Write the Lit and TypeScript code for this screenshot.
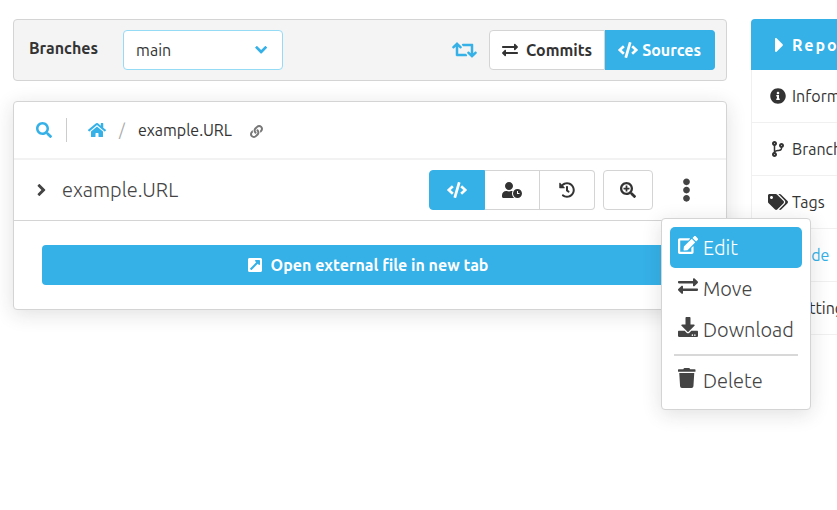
import { LitElement, html, css, svg } from "lit";
import { customElement, property, state } from "lit/decorators.js";
import { classMap } from "lit/directives/class-map.js";

const ICONS: Record<string, [number, string]> = {
  search: [512, "M505 442.7L405.3 343c-4.5-4.5-10.6-7-17-7H372c27.6-35.3 44-79.7 44-128C416 93.1 322.9 0 208 0S0 93.1 0 208s93.1 208 208 208c48.3 0 92.7-16.4 128-44v16.3c0 6.4 2.5 12.5 7 17l99.7 99.7c9.4 9.4 24.6 9.4 33.9 0l28.3-28.3c9.4-9.4 9.4-24.6.1-34zM208 336c-70.7 0-128-57.2-128-128 0-70.7 57.2-128 128-128 70.7 0 128 57.2 128 128 0 70.7-57.2 128-128 128z"],
  home: [576, "M280.37 148.26L96 300.11V464a16 16 0 0 0 16 16l112.06-.29a16 16 0 0 0 15.92-16V368a16 16 0 0 1 16-16h64a16 16 0 0 1 16 16v95.64a16 16 0 0 0 16 16.05L464 480a16 16 0 0 0 16-16V300L295.67 148.26a12.19 12.19 0 0 0-15.3 0zM571.6 251.47L488 182.56V44.05a12 12 0 0 0-12-12h-56a12 12 0 0 0-12 12v72.61L318.47 43a48 48 0 0 0-61 0L4.34 251.47a12 12 0 0 0-1.6 16.9l25.5 31A12 12 0 0 0 45.15 301l235.22-193.74a12.19 12.19 0 0 1 15.3 0L530.9 301a12 12 0 0 0 16.9-1.6l25.5-31a12 12 0 0 0-1.7-16.93z"],
  code: [640, "M278.9 511.5l-61-17.7c-6.4-1.8-10-8.5-8.2-14.9L346.2 8.7c1.8-6.4 8.5-10 14.9-8.2l61 17.7c6.4 1.8 10 8.5 8.2 14.9L293.8 503.3c-1.9 6.4-8.5 10.1-14.9 8.2zm-114-112.2l43.5-46.4c4.6-4.9 4.3-12.7-.8-17.2L117 256l90.6-79.7c5.1-4.5 5.5-12.3.8-17.2l-43.5-46.4c-4.5-4.8-12.1-5.1-17-.5L3.8 247.2c-5.1 4.7-5.1 12.8 0 17.5l144.1 135.1c4.9 4.6 12.5 4.4 17-.5zm327.2.6l144.1-135.1c5.1-4.7 5.1-12.8 0-17.5L492.1 112.1c-4.8-4.5-12.4-4.3-17 .5L431.6 159c-4.6 4.9-4.3 12.7.8 17.2L523 256l-90.6 79.7c-5.1 4.5-5.5 12.3-.8 17.2l43.5 46.4c4.5 4.9 12.1 5.1 17 .6z"],
  exchange: [512, "M0 168v-16c0-13.255 10.745-24 24-24h360V80c0-21.367 25.899-32.042 40.971-16.971l80 80c9.372 9.373 9.372 24.569 0 33.941l-80 80C409.956 271.982 384 261.456 384 240v-48H24c-13.255 0-24-10.745-24-24zm488 152H128v-48c0-21.314-25.862-32.08-40.971-16.971l-80 80c-9.372 9.373-9.372 24.569 0 33.941l80 80C102.057 463.997 128 453.437 128 432v-48h360c13.255 0 24-10.745 24-24v-16c0-13.255-10.745-24-24-24z"],
  retweet: [640, "M629.657 343.598L528.971 444.284c-9.373 9.372-24.568 9.372-33.941 0L394.343 343.598c-9.373-9.373-9.373-24.569 0-33.941l10.823-10.823c9.562-9.562 25.133-9.34 34.419.492L480 342.118V160H292.451a24.005 24.005 0 0 1-16.971-7.029l-16-16C244.361 121.851 255.069 96 276.451 96H520c13.255 0 24 10.745 24 24v222.118l40.416-42.792c9.285-9.831 24.856-10.054 34.419-.492l10.823 10.823c9.372 9.372 9.372 24.569-.001 33.941zm-265.138 15.431A23.999 23.999 0 0 0 347.548 352H160V169.881l40.416 42.792c9.286 9.831 24.856 10.054 34.419.491l10.822-10.822c9.373-9.373 9.373-24.569 0-33.941L144.971 67.716c-9.373-9.373-24.569-9.373-33.941 0L10.343 168.402c-9.373 9.373-9.373 24.569 0 33.941l10.822 10.822c9.562 9.562 25.133 9.34 34.419-.491L96 169.882V392c0 13.255 10.745 24 24 24h243.549c21.382 0 32.09-25.851 16.971-40.971l-16.001-16z"],
  chevronDown: [448, "M207.029 381.476L12.686 187.132c-9.373-9.373-9.373-24.569 0-33.941l38.667-38.667c9.357-9.357 24.522-9.375 33.901-.04L224 252.505l138.745-138.021c9.379-9.335 24.544-9.317 33.901.04l38.667 38.667c9.373 9.373 9.373 24.569 0 33.941L240.971 381.476c-9.373 9.372-24.569 9.372-33.942 0z"],
  chevronRight: [384, "M333.476 272.971L139.132 467.314c-9.373 9.373-24.569 9.373-33.941 0l-40.667-40.667c-9.357-9.357-9.375-24.522-.04-33.901L200.505 256 64.484 119.255c-9.335-9.379-9.317-24.544.04-33.901l40.667-40.667c9.373-9.373 24.569-9.373 33.941 0L333.475 239.03c9.373 9.372 9.373 24.568.001 33.941z"],
  link: [512, "M326.612 185.391c59.747 59.809 58.927 155.698.36 214.59-.11.12-.24.25-.36.37l-67.2 67.2c-59.27 59.27-155.699 59.262-214.96 0-59.27-59.26-59.27-155.7 0-214.96l37.106-37.106c9.84-9.84 26.786-3.3 27.294 10.606.648 17.722 3.826 35.527 9.69 52.721 1.986 5.822.567 12.262-3.783 16.612l-13.087 13.087c-28.026 28.026-28.905 73.66-1.155 101.96 28.024 28.579 74.086 28.749 102.325.51l67.2-67.19c28.191-28.191 28.073-73.757 0-101.83-3.701-3.694-7.429-6.564-10.341-8.569a16.037 16.037 0 0 1-6.947-12.606c-.396-10.567 3.348-21.456 11.698-29.806l21.054-21.055c5.521-5.521 14.182-6.199 20.584-1.731a152.482 152.482 0 0 1 20.522 17.197zM467.547 44.449c-59.261-59.262-155.69-59.27-214.96 0l-67.2 67.2c-.12.12-.25.25-.36.37-58.566 58.892-59.387 154.781.36 214.59a152.454 152.454 0 0 0 20.521 17.196c6.402 4.468 15.064 3.789 20.584-1.731l21.054-21.055c8.35-8.35 12.094-19.239 11.698-29.806a16.037 16.037 0 0 0-6.947-12.606c-2.912-2.005-6.64-4.875-10.341-8.569-28.073-28.073-28.191-73.639 0-101.83l67.2-67.19c28.239-28.239 74.3-28.069 102.325.51 27.75 28.3 26.872 73.934-1.155 101.96l-13.087 13.087c-4.35 4.35-5.769 10.79-3.783 16.612 5.864 17.194 9.042 34.999 9.69 52.721.509 13.906 17.454 20.446 27.294 10.606l37.106-37.106c59.271-59.259 59.271-155.699.001-214.959z"],
  userClock: [640, "M496 224c-79.6 0-144 64.4-144 144s64.4 144 144 144 144-64.4 144-144-64.4-144-144-144zm64 150.3c0 5.3-4.4 9.7-9.7 9.7h-60.6c-5.3 0-9.7-4.4-9.7-9.7v-76.6c0-5.3 4.4-9.7 9.7-9.7h12.6c5.3 0 9.7 4.4 9.7 9.7V352h38.3c5.3 0 9.7 4.4 9.7 9.7v12.6zM320 368c0-27.8 6.7-54.1 18.2-77.5-8-1.5-16.2-2.5-24.6-2.5h-16.7c-22.2 10.2-46.9 16-72.9 16s-50.6-5.8-72.9-16h-16.7C60.2 288 0 348.2 0 422.4V464c0 26.5 21.5 48 48 48h347.1c-45.3-31.9-75.1-84.5-75.1-144zm-96-112c70.7 0 128-57.3 128-128S294.7 0 224 0 96 57.3 96 128s57.3 128 128 128z"],
  history: [512, "M504 255.531c.253 136.64-111.18 248.372-247.82 248.468-59.015.042-113.223-20.53-155.822-54.911-11.077-8.94-11.905-25.541-1.839-35.607l11.267-11.267c8.609-8.609 22.353-9.551 31.891-1.984C173.062 425.135 212.781 440 256 440c101.705 0 184-82.311 184-184 0-101.705-82.311-184-184-184-48.814 0-93.149 18.969-126.068 49.932l50.754 50.754c10.08 10.08 2.941 27.314-11.313 27.314H24c-8.837 0-16-7.163-16-16V38.627c0-14.254 17.234-21.393 27.314-11.314l49.372 49.372C129.209 34.136 189.552 8 256 8c136.81 0 247.747 110.78 248 247.531zm-180.912 78.784l9.823-12.63c8.138-10.463 6.253-25.542-4.21-33.679L288 256.349V152c0-13.255-10.745-24-24-24h-16c-13.255 0-24 10.745-24 24v135.651l65.409 50.874c10.463 8.137 25.541 6.253 33.679-4.21z"],
  searchPlus: [512, "M304 192v32c0 6.6-5.4 12-12 12h-56v56c0 6.6-5.4 12-12 12h-32c-6.6 0-12-5.4-12-12v-56h-56c-6.6 0-12-5.4-12-12v-32c0-6.6 5.4-12 12-12h56v-56c0-6.6 5.4-12 12-12h32c6.6 0 12 5.4 12 12v56h56c6.6 0 12 5.4 12 12zm201 284.7L476.7 505c-9.4 9.4-24.6 9.4-33.9 0L343 405.3c-4.5-4.5-7-10.6-7-17V372c-35.3 27.6-79.7 44-128 44C93.1 416 0 322.9 0 208S93.1 0 208 0s208 93.1 208 208c0 48.3-16.4 92.7-44 128h16.3c6.4 0 12.5 2.5 17 7l99.7 99.7c9.3 9.4 9.3 24.6 0 34zM344 208c0-75.2-60.8-136-136-136S72 132.8 72 208s60.8 136 136 136 136-60.8 136-136z"],
  ellipsis: [192, "M96 184c39.8 0 72 32.2 72 72s-32.2 72-72 72-72-32.2-72-72 32.2-72 72-72zM24 80c0 39.8 32.2 72 72 72s72-32.2 72-72S135.8 8 96 8 24 40.2 24 80zm0 352c0 39.8 32.2 72 72 72s72-32.2 72-72-32.2-72-72-72-72 32.2-72 72z"],
  external: [448, "M448 80v352c0 26.51-21.49 48-48 48H48c-26.51 0-48-21.49-48-48V80c0-26.51 21.49-48 48-48h352c26.51 0 48 21.49 48 48zm-88 16H248.029c-21.313 0-32.08 25.861-16.971 40.971l31.984 31.987L67.515 364.485c-4.686 4.686-4.686 12.284 0 16.971l31.029 31.029c4.687 4.686 12.285 4.686 16.971 0l195.526-195.526 31.988 31.991C358.058 264.977 384 254.425 384 232V120c0-13.255-10.745-24-24-24z"],
  edit: [576, "M402.6 83.2l90.2 90.2c3.8 3.8 3.8 10 0 13.8L274.4 405.6l-92.8 10.3c-12.4 1.4-22.9-9.1-21.5-21.5l10.3-92.8L388.8 83.2c3.8-3.8 10-3.8 13.8 0zm162-22.9l-48.8-48.8c-15.2-15.2-39.9-15.2-55.2 0l-35.4 35.4c-3.8 3.8-3.8 10 0 13.8l90.2 90.2c3.8 3.8 10 3.8 13.8 0l35.4-35.4c15.2-15.3 15.2-40 0-55.2zM384 346.2V448H64V128h229.8c3.2 0 6.2-1.3 8.5-3.5l40-40c7.6-7.6 2.2-20.5-8.5-20.5H48C21.5 64 0 85.5 0 112v352c0 26.5 21.5 48 48 48h352c26.5 0 48-21.5 48-48V306.2c0-10.7-12.9-16-20.5-8.5l-40 40c-2.2 2.3-3.5 5.3-3.5 8.5z"],
  download: [512, "M216 0h80c13.3 0 24 10.7 24 24v168h87.7c17.8 0 26.7 21.5 14.1 34.1L269.7 378.3c-7.5 7.5-19.8 7.5-27.3 0L90.1 226.1c-12.6-12.6-3.7-34.1 14.1-34.1H192V24c0-13.3 10.7-24 24-24zm296 376v112c0 13.3-10.7 24-24 24H24c-13.3 0-24-10.7-24-24V376c0-13.3 10.7-24 24-24h146.7l49 49c20.1 20.1 52.5 20.1 72.6 0l49-49H488c13.3 0 24 10.7 24 24zm-124 88c0-11-9-20-20-20s-20 9-20 20 9 20 20 20 20-9 20-20zm64 0c0-11-9-20-20-20s-20 9-20 20 9 20 20 20 20-9 20-20z"],
  trash: [448, "M432 32H312l-9.4-18.7A24 24 0 0 0 281.1 0H166.8a23.72 23.72 0 0 0-21.4 13.3L136 32H16A16 16 0 0 0 0 48v32a16 16 0 0 0 16 16h416a16 16 0 0 0 16-16V48a16 16 0 0 0-16-16zM53.2 467a48 48 0 0 0 47.9 45h245.8a48 48 0 0 0 47.9-45L416 128H32z"],
  caretRight: [192, "M0 384.662V127.338c0-17.818 21.543-26.741 34.142-14.142l128.662 128.662c7.81 7.81 7.81 20.474 0 28.284L34.142 398.804C21.543 411.404 0 402.48 0 384.662z"],
  info: [512, "M256 8C119.043 8 8 119.083 8 256c0 136.997 111.043 248 248 248s248-111.003 248-248C504 119.083 392.957 8 256 8zm0 110c23.196 0 42 18.804 42 42s-18.804 42-42 42-42-18.804-42-42 18.804-42 42-42zm56 254c0 6.627-5.373 12-12 12h-88c-6.627 0-12-5.373-12-12v-24c0-6.627 5.373-12 12-12h12v-64h-12c-6.627 0-12-5.373-12-12v-24c0-6.627 5.373-12 12-12h64c6.627 0 12 5.373 12 12v100h12c6.627 0 12 5.373 12 12v24z"],
  branch: [384, "M384 144c0-44.2-35.8-80-80-80s-80 35.8-80 80c0 36.4 24.3 67.1 57.5 76.8-.6 16.1-4.2 28.5-11 36.9-15.4 19.2-49.3 22.4-85.2 25.7-28.2 2.6-57.4 5.4-81.3 16.9v-144c32.5-10.2 56-40.5 56-76.3 0-44.2-35.8-80-80-80S0 35.8 0 80c0 35.8 23.5 66.1 56 76.3v199.3C23.5 365.9 0 396.2 0 432c0 44.2 35.8 80 80 80s80-35.8 80-80c0-34-21.2-63.1-51.2-74.6 3.1-5.2 7.8-9.8 14.9-13.4 16.2-8.2 40.4-10.4 66.1-12.8 42.2-3.9 90-8.4 118.2-43.4 14-17.4 21.1-39.8 21.6-67.9 31.6-10.8 54.4-40.7 54.4-75.9zM80 64c8.8 0 16 7.2 16 16s-7.2 16-16 16-16-7.2-16-16 7.2-16 16-16zm0 384c-8.8 0-16-7.2-16-16s7.2-16 16-16 16 7.2 16 16-7.2 16-16 16zm224-320c8.8 0 16 7.2 16 16s-7.2 16-16 16-16-7.2-16-16 7.2-16 16-16z"],
  tags: [640, "M497.941 225.941L286.059 14.059A48 48 0 0 0 252.118 0H48C21.49 0 0 21.49 0 48v204.118a48 48 0 0 0 14.059 33.941l211.882 211.882c18.744 18.745 49.136 18.746 67.882 0l204.118-204.118c18.745-18.745 18.745-49.137 0-67.882zM112 160c-26.51 0-48-21.49-48-48s21.49-48 48-48 48 21.49 48 48-21.49 48-48 48zm513.941 133.823L421.823 497.941c-18.745 18.745-49.137 18.745-67.882 0l-.36-.36L527.64 323.522c16.999-16.999 26.36-39.6 26.36-63.64s-9.362-46.641-26.36-63.64L331.397 0h48.721a48 48 0 0 1 33.941 14.059l211.882 211.882c18.745 18.745 18.745 49.137 0 67.882z"],
};

/** Glyph whose height is the current font size. */
@customElement("ui-icon")
class UiIcon extends LitElement {
  @property() name = "code";

  static styles = css`
    :host { display: inline-flex; flex: none; }
    .glyph { display: block; height: 1em; width: auto; fill: currentColor; }
  `;

  render() {
    const [width, d] = ICONS[this.name];
    return html`<svg class="glyph" viewBox="0 0 ${width} 512" aria-hidden="true">${svg`<path d=${d}></path>`}</svg>`;
  }
}

@customElement("app-root")
class AppRoot extends LitElement {
  @state() private view = "code";
  @state() private menuOpen = true;

  private views = [
    { id: "code", icon: "code", label: "Source" },
    { id: "blame", icon: "userClock", label: "Blame" },
    { id: "history", icon: "history", label: "History" },
  ];

  private actions = [
    { icon: "edit", label: "Edit", active: true },
    { icon: "exchange", label: "Move", active: false },
    { icon: "download", label: "Download", active: false },
  ];

  private nav = [
    { icon: "info", label: "Information", active: false },
    { icon: "branch", label: "Branches", active: false },
    { icon: "tags", label: "Tags", active: false },
    { icon: "code", label: "Code", active: true },
    { icon: "history", label: "Settings", active: false },
  ];

  static styles = css`
    :host {
      --blue: #35b1e8;
      --line: #d4d4d5;
      --text: #333;
      display: block;
      min-height: 100vh;
      box-sizing: border-box;
      background: #fff;
      color: var(--text);
      font: 16px/20px Ubuntu, "Open Sans", sans-serif;
    }
    * { box-sizing: border-box; }
    button, select { font: inherit; color: inherit; margin: 0; cursor: pointer; }
    a { color: inherit; text-decoration: none; }

    .page { display: flex; align-items: flex-start; gap: 24px; padding: 19px 0 19px 13px; }
    .main { flex: 1; min-width: 0; display: grid; gap: 20px; }

    .toolbar {
      display: flex;
      align-items: center;
      padding: 10px 11px 10px 15px;
      background: #f4f4f4;
      border: 1px solid var(--line);
      border-radius: 4px;
    }
    .toolbar-label { font-weight: 700; padding-bottom: 4px; }
    .select-wrap { position: relative; width: 160px; margin-left: 25px; color: var(--blue); }
    .select {
      appearance: none;
      display: block;
      width: 100%;
      height: 40px;
      padding: 0 40px 0 12px;
      color: var(--text);
      background: #fff;
      border: 1px solid #96dbf6;
      border-radius: 4px;
    }
    .select-arrow { position: absolute; right: 16px; top: 13px; font-size: 14px; pointer-events: none; }
    .sync { margin-left: auto; padding: 0; border: 0; background: none; color: var(--blue); font-size: 20px; display: flex; }

    .group { display: flex; }
    .tabs { margin-left: 12px; }
    .btn {
      display: flex;
      align-items: center;
      justify-content: center;
      height: 40px;
      padding: 0 12px;
      font-weight: 700;
      background: #fff;
      border: 1px solid var(--line);
      white-space: nowrap;
    }
    .btn ui-icon { font-size: 16px; }
    .btn.on { background: var(--blue); border-color: var(--blue); color: #fff; }
    .group .btn + .btn { border-left: 0; }
    .group .btn:first-child { border-radius: 4px 0 0 4px; }
    .group .btn:last-child { border-radius: 0 4px 4px 0; }
    .commits { gap: 8px; }
    .sources { gap: 4px; padding: 0 13px; }

    .card {
      background: #fff;
      border: 1px solid var(--line);
      border-radius: 4px;
      box-shadow: 0 4px 20px rgba(34, 36, 38, .14);
    }
    .crumbs {
      display: flex;
      align-items: center;
      height: 58px;
      padding: 0 22px;
      border-bottom: 2px solid #f2f2f2;
    }
    .plain { display: flex; padding: 0; border: 0; background: none; }
    .search { color: var(--blue); font-size: 16px; padding-right: 14px; }
    .rule { width: 1px; height: 24px; background: #ccc; }
    .home { display: flex; color: var(--blue); font-size: 16px; margin-left: 21px; }
    .slash { margin: 0 13px; color: #aaa; }
    .permalink { color: #777; font-size: 13px; margin-left: 18px; padding-top: 2px; }

    .file { display: flex; align-items: center; height: 61px; padding: 0 27px 0 22px; border-bottom: 1px solid var(--line); }
    .toggle { font-size: 14px; width: 26px; color: #444; }
    .file-name { flex: 1; margin: 0; color: #444; font-size: 20px; font-weight: 300; line-height: 24px; }
    .icon-btn { width: 55px; padding: 0; }
    .group .icon-btn:first-child { width: 56px; }
    .zoom { width: 50px; margin-left: 8px; border-radius: 4px; }
    .more-wrap { position: relative; margin-left: 20px; }
    .more { width: 26px; justify-content: center; font-size: 24px; color: #444; }

    .menu {
      position: absolute;
      z-index: 2;
      top: 40px;
      left: -12px;
      width: 150px;
      padding: 8px;
      background: #fff;
      border: 1px solid var(--line);
      border-radius: 4px;
      box-shadow: 0 4px 20px rgba(34, 36, 38, .14);
    }
    .item {
      display: flex;
      align-items: center;
      gap: 5px;
      width: 100%;
      height: 41px;
      padding: 0 8px;
      border: 0;
      border-radius: 5px;
      background: none;
      color: #444;
      font-size: 20px;
      font-weight: 300;
      line-height: 28px;
      text-align: left;
    }
    .item ui-icon { width: 20px; padding-bottom: 5px; }
    .item.on { background: var(--blue); color: #fff; }
    .divider { height: 2px; margin: 4px; border: 0; background: #d8d8d8; }

    .body { padding: 24px 28px; }
    .open {
      display: flex;
      align-items: center;
      justify-content: center;
      gap: 9px;
      height: 40px;
      padding-right: 4px;
      border-radius: 4px;
      background: var(--blue);
      color: #fff;
      font-weight: 700;
    }
    .open ui-icon { font-size: 16px; }

    .side { flex: 0 0 86px; overflow: hidden; white-space: nowrap; border-radius: 4px 0 0 0; }
    .side-head {
      display: flex;
      align-items: center;
      gap: 8px;
      height: 51px;
      margin: 0;
      padding-left: 24px;
      background: var(--blue);
      color: #fff;
      font-size: 16px;
      font-weight: 700;
      letter-spacing: 2px;
    }
    .side-head ui-icon { font-size: 24px; }
    .side-list { margin: 0; padding: 0; list-style: none; border-left: 1px solid #f0f0f0; }
    .side-link {
      display: flex;
      align-items: center;
      gap: 4px;
      height: 53px;
      padding-left: 16px;
      border-bottom: 1px solid #f0f0f0;
    }
    .side-link ui-icon { width: 20px; justify-content: center; font-size: 16px; }
    .side-link.on { color: var(--blue); }
  `;

  render() {
    return html`
      <div class="page">
        <main class="main">
          <div class="toolbar">
            <label class="toolbar-label" for="branch">Branches</label>
            <div class="select-wrap">
              <select class="select" id="branch"><option>main</option></select>
              <ui-icon class="select-arrow" name="chevronDown"></ui-icon>
            </div>
            <button class="sync" aria-label="Compare"><ui-icon name="retweet"></ui-icon></button>
            <div class="group tabs">
              <button class="btn commits"><ui-icon name="exchange"></ui-icon>Commits</button>
              <button class="btn sources on"><ui-icon name="code"></ui-icon>Sources</button>
            </div>
          </div>

          <section class="card">
            <nav class="crumbs" aria-label="Path">
              <button class="plain search" aria-label="Search"><ui-icon name="search"></ui-icon></button>
              <span class="rule"></span>
              <a class="home" href="#" aria-label="Root"><ui-icon name="home"></ui-icon></a>
              <span class="slash">/</span>
              <span>example.URL</span>
              <button class="plain permalink" aria-label="Permalink"><ui-icon name="link"></ui-icon></button>
            </nav>
            <div class="file">
              <button class="plain toggle" aria-label="Expand"><ui-icon name="chevronRight"></ui-icon></button>
              <h2 class="file-name">example.URL</h2>
              <div class="group">
                ${this.views.map((v) => html`
                  <button
                    class=${classMap({ btn: true, "icon-btn": true, on: v.id === this.view })}
                    aria-label=${v.label}
                    @click=${() => (this.view = v.id)}
                  ><ui-icon name=${v.icon}></ui-icon></button>`)}
              </div>
              <button class="btn icon-btn zoom" aria-label="Zoom in"><ui-icon name="searchPlus"></ui-icon></button>
              <div class="more-wrap">
                <button
                  class="plain more"
                  aria-label="More actions"
                  aria-expanded=${this.menuOpen}
                  @click=${() => (this.menuOpen = !this.menuOpen)}
                ><ui-icon name="ellipsis"></ui-icon></button>
                ${this.menuOpen ? html`
                  <div class="menu">
                    ${this.actions.map((a) => html`
                      <button class=${classMap({ item: true, on: a.active })}>
                        <ui-icon name=${a.icon}></ui-icon>${a.label}
                      </button>`)}
                    <hr class="divider">
                    <button class="item"><ui-icon name="trash"></ui-icon>Delete</button>
                  </div>` : null}
              </div>
            </div>
            <div class="body">
              <a class="open" href="#"><ui-icon name="external"></ui-icon>Open external file in new tab</a>
            </div>
          </section>
        </main>

        <aside class="side">
          <h2 class="side-head"><ui-icon name="caretRight"></ui-icon>Repository</h2>
          <ul class="side-list">
            ${this.nav.map((n) => html`
              <li>
                <a class=${classMap({ "side-link": true, on: n.active })} href="#">
                  <ui-icon name=${n.icon}></ui-icon>${n.label}
                </a>
              </li>`)}
          </ul>
        </aside>
      </div>
    `;
  }
}
